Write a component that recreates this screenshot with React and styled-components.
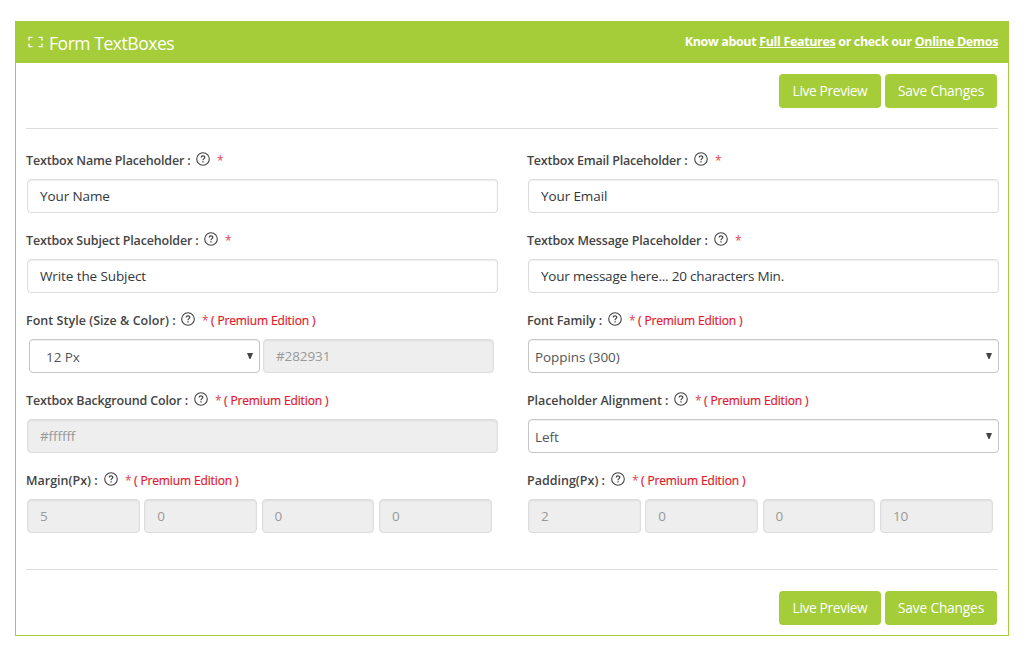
import React from "react";
import styled, { createGlobalStyle } from "styled-components";

const GREEN = "#a4cd39";

const GlobalStyle = createGlobalStyle`
  * { box-sizing: border-box; }
  body { margin: 0; background: #fff; font-family: "Open Sans", "Noto Sans", sans-serif; }
`;

const Page = styled.main`
  padding: 21px 17px 20px 15px;
  height: 656px;
`;

const Panel = styled.section`
  height: 615px;
  border: 1px solid ${GREEN};
  display: flex;
  flex-direction: column;
`;

const Header = styled.header`
  height: 41px;
  flex: none;
  background: ${GREEN};
  color: #fff;
  display: flex;
  justify-content: space-between;
  padding: 0 10px 0 12px;
`;

const Title = styled.h1`
  margin: 0;
  display: flex;
  gap: 6px;
  font-size: 17.5px;
  font-weight: 400;
  line-height: 42px;
  letter-spacing: ${(p) => p.$spacing}px;

  svg { margin-top: 14px; }
`;

const Links = styled.p`
  margin: 0;
  font-size: 12.5px;
  font-weight: 700;
  line-height: 39px;
  white-space: nowrap;
  letter-spacing: ${(p) => p.$spacing}px;

  a { color: inherit; text-decoration: underline; }
`;

const Body = styled.div`
  flex: 1;
  padding: 11px 10px 10px;
  display: flex;
  flex-direction: column;
`;

const Actions = styled.div`
  display: flex;
  justify-content: flex-end;
  gap: 4px;
  padding-right: 1px;
`;

const Button = styled.button`
  width: ${(p) => p.$width}px;
  height: 34px;
  padding: 0 0 2px;
  border: 0;
  border-radius: 4px;
  background: ${GREEN};
  color: #fff;
  font: 400 13.7px "Open Sans", sans-serif;
  letter-spacing: ${(p) => p.$spacing}px;
  white-space: nowrap;
`;

const Rule = styled.hr`
  width: 100%;
  height: 1px;
  border: 0;
  margin: ${(p) => p.$margin};
  background: #ddd;
  flex: none;
`;

const Fields = styled.div`
  display: grid;
  grid-template-columns: 472px 472px;
  column-gap: 29px;
  grid-auto-rows: 80px;
`;

const Field = styled.div`
  display: flex;
  flex-direction: column;
`;

const Caption = styled.div`
  display: flex;
  height: 30px;
  line-height: 22px;
  font-size: 12.5px;
  white-space: nowrap;

  svg { margin: 3px 0 0 7px; flex: none; }
`;

const Name = styled.label`
  width: ${(p) => p.$width}px;
  flex: none;
  font-weight: 600;
  line-height: 24px;
  color: #444;
  letter-spacing: ${(p) => p.$spacing}px;
`;

const Required = styled.span`
  margin-left: 7px;
  width: 6px;
  color: #e04050;
  font-size: 12px;
  line-height: 23px;
`;

const Premium = styled.span`
  margin-left: 3px;
  color: #e2182a;
  font-size: 12px;
  line-height: 23px;
  font-weight: 400;
  letter-spacing: -0.13px;
  -webkit-text-stroke: 0.2px #e2182a;
`;

const Controls = styled.div`
  display: flex;
  padding-left: ${(p) => p.$inset || 1}px;
  gap: ${(p) => p.$gap || 0}px;
`;

const Input = styled.input`
  width: ${(p) => p.$width}px;
  height: 34px;
  padding: 0 12px 1px;
  border: 1px solid #ddd;
  border-radius: 4px;
  background: #fff;
  box-shadow: inset 0 1px 2px rgba(0, 0, 0, 0.07);
  color: #32373c;
  font: 400 13.5px "Open Sans", sans-serif;
  letter-spacing: ${(p) => p.$spacing ?? -0.1}px;

  &:disabled { background: #eee; color: #999; }
`;

const Select = styled.div`
  width: ${(p) => p.$width}px;
  height: 34px;
  padding: 1px 6px 0 ${(p) => p.$inset}px;
  display: flex;
  justify-content: space-between;
  align-items: center;
  border: 1px solid #c6c6c6;
  border-radius: 4px;
  box-shadow: inset 0 1px 1px rgba(0, 0, 0, 0.075);
  color: #555;
  font-size: 13.5px;
  letter-spacing: ${(p) => p.$spacing ?? -0.07}px;

  svg { margin-top: -1px; }
`;

const CornersIcon = () => (
  <svg width="15" height="12" viewBox="0 0 15 12" fill="none" stroke="#fff" strokeWidth="1.3">
    <path d="M1 4.5V1.3H4.5M10.5 1.3H14V4.5M14 7.5V10.7H10.5M4.5 10.7H1V7.5" />
  </svg>
);

const HelpIcon = () => (
  <svg width="14" height="14" viewBox="0 0 14 14" fill="none" stroke="#444">
    <circle cx="7" cy="7" r="6.3" strokeWidth="1.1" />
    <path d="M5.2 5.4C5.2 3.3 8.8 3.3 8.8 5.3C8.8 6.6 7 6.7 7 8.2" strokeWidth="1.25" />
    <path d="M7 9.2V10.5" strokeWidth="1.3" />
  </svg>
);

const Arrow = () => (
  <svg width="6" height="6" viewBox="0 0 6 6" fill="#444">
    <path d="M0 0H6L3.5 6H2.5Z" />
  </svg>
);

const ActionBar = () => (
  <Actions>
    <Button $width={102} $spacing={-0.33}>Live Preview</Button>
    <Button $width={112} $spacing={-0.15}>Save Changes</Button>
  </Actions>
);

const FormField = ({ name, width, spacing = 0, premium, inset, gap, children }) => (
  <Field>
    <Caption>
      <Name $width={width} $spacing={spacing}>{name} :</Name>
      <HelpIcon />
      <Required>*</Required>
      {premium && <Premium>( Premium Edition )</Premium>}
    </Caption>
    <Controls $inset={inset} $gap={gap}>{children}</Controls>
  </Field>
);

const Quad = ({ values }) =>
  values.map((v, i) => <Input key={i} $width={112.8} disabled defaultValue={v} />);

export default function App() {
  return (
    <>
      <GlobalStyle />
      <Page>
        <Panel>
          <Header>
            <Title $spacing={-0.45}><CornersIcon />Form TextBoxes</Title>
            <Links $spacing={-0.35}>
              Know about <a>Full Features</a> or check our <a>Online Demos</a>
            </Links>
          </Header>
          <Body>
            <ActionBar />
            <Rule $margin="20px 0 20px" />
            <Fields>
              <FormField name="Textbox Name Placeholder" width={163} spacing={-0.17}>
                <Input $width={471} defaultValue="Your Name" />
              </FormField>
              <FormField name="Textbox Email Placeholder" width={160} spacing={-0.2}>
                <Input $width={471} defaultValue="Your Email" />
              </FormField>
              <FormField name="Textbox Subject Placeholder" width={171} spacing={-0.16}>
                <Input $width={471} defaultValue="Write the Subject" />
              </FormField>
              <FormField name="Textbox Message Placeholder" width={180} spacing={-0.15}>
                <Input $width={471} $spacing={-0.2} defaultValue="Your message here... 20 characters Min." />
              </FormField>
              <FormField name="Font Style (Size & Color)" width={148} spacing={0.03} premium inset={3} gap={3}>
                <Select $width={231} $inset={16}>12 Px<Arrow /></Select>
                <Input $width={231} disabled defaultValue="#282931" />
              </FormField>
              <FormField name="Font Family" width={74} spacing={-0.12} premium>
                <Select $width={471} $inset={6}>Poppins (300)<Arrow /></Select>
              </FormField>
              <FormField name="Textbox Background Color" width={161} spacing={-0.16} premium>
                <Input $width={471} disabled defaultValue="#ffffff" />
              </FormField>
              <FormField name="Placeholder Alignment" width={140} spacing={-0.09} premium>
                <Select $width={471} $inset={6}>Left<Arrow /></Select>
              </FormField>
              <FormField name="Margin(Px)" width={71} premium gap={4.5}>
                <Quad values={["5", "0", "0", "0"]} />
              </FormField>
              <FormField name="Padding(Px)" width={77} premium gap={4.5}>
                <Quad values={["2", "0", "0", "10"]} />
              </FormField>
            </Fields>
            <Rule $margin="20px 0 21px" />
            <ActionBar />
          </Body>
        </Panel>
      </Page>
    </>
  );
}
